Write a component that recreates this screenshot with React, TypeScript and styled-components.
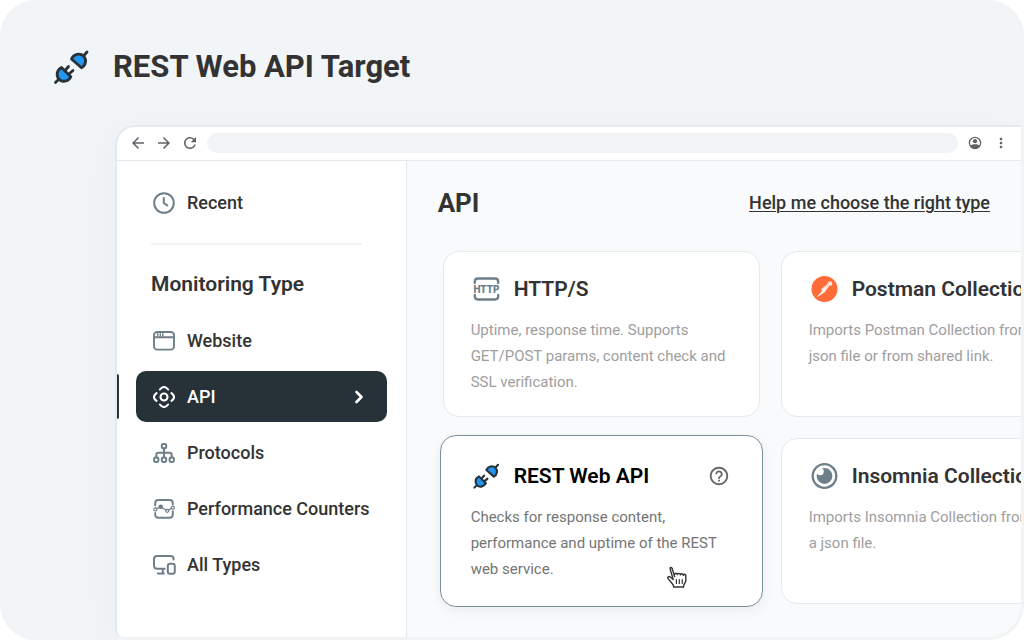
import React from "react";
import styled, { createGlobalStyle, css } from "styled-components";
import { MdArrowBack, MdArrowForward, MdRefresh, MdMoreVert, MdHelpOutline } from "react-icons/md";

const colors = {
  ink: "#333333",
  dark: "#263238",
  slate: "#6f7f8a",
  line: "#e4e9ec",
  blue: "#2196f3",
};

const GlobalStyle = createGlobalStyle`
  *, *::before, *::after { box-sizing: border-box; }
  body {
    margin: 0;
    background: #ffffff;
    color: ${colors.ink};
    font-family: Roboto, "Liberation Sans", sans-serif;
  }
  button, input { font: inherit; color: inherit; }
  h1, h2, h3, p, ul { margin: 0; padding: 0; }
`;

const Frame = styled.div`
  display: flex;
  flex-direction: column;
  height: 100vh;
  min-height: 640px;
  border: 3px solid #f1f3f4;
  border-radius: 36px;
  background: #f1f5f7;
  overflow: hidden;
`;

const PageHeader = styled.header`
  display: flex;
  align-items: center;
  gap: 24px;
  padding: 46px 50px 40px;
`;

const PageTitle = styled.h1`
  font-size: 31px;
  line-height: 36px;
  font-weight: 700;
`;

const BrowserWindow = styled.div`
  flex: 1;
  display: flex;
  flex-direction: column;
  margin-left: 112px;
  border: solid ${colors.line};
  border-width: 2px 0 0 2px;
  border-radius: 20px 0 0 8px;
  background: #ffffff;
  box-shadow: -6px 6px 40px rgba(38, 50, 56, 0.03);
  overflow: hidden;
`;

const Toolbar = styled.div`
  display: flex;
  align-items: center;
  gap: 8px;
  height: 34px;
  padding: 0 11px 1px 12px;
  border-bottom: 1px solid ${colors.line};
  color: #5f6368;
`;

const ToolButton = styled.button`
  display: flex;
  align-items: center;
  justify-content: center;
  width: 18px;
  height: 18px;
  padding: 0;
  border: 0;
  background: none;
`;

const AddressBar = styled.input`
  flex: 1;
  min-width: 0;
  height: 20px;
  padding: 0 12px;
  border: 0;
  border-radius: 10px;
  background: #f1f3f4;
  font-size: 12px;
`;

const Body = styled.div`
  flex: 1;
  display: flex;
  min-height: 0;
`;

const Sidebar = styled.nav`
  flex: 0 0 289px;
  padding: 16px 19px 0;
  border-right: 1px solid ${colors.line};
`;

const NavList = styled.ul`
  display: flex;
  flex-direction: column;
  gap: 5px;
  list-style: none;
`;

const NavItem = styled.a<{ $active?: boolean }>`
  position: relative;
  display: flex;
  align-items: center;
  gap: 12px;
  height: 51px;
  padding: 0 17px;
  border-radius: 10px;
  font-size: 18px;
  line-height: 24px;
  font-weight: 500;
  text-decoration: none;
  white-space: nowrap;
  color: ${colors.ink};

  > svg { flex: none; color: ${colors.slate}; }

  ${(p) =>
    p.$active &&
    css`
      background: ${colors.dark};
      color: #ffffff;
      > svg { color: #ffffff; }
      &::before {
        content: "";
        position: absolute;
        left: -19px;
        top: 3px;
        bottom: 3px;
        width: 2px;
        border-radius: 0 2px 2px 0;
        background: ${colors.dark};
      }
    `}
`;

const NavLabel = styled.span`
  flex: 1;
`;

const Divider = styled.hr`
  height: 2px;
  margin: 15px 25px 27px 15px;
  border: 0;
  background: #f1f3f4;
`;

const NavHeading = styled.h2`
  padding: 0 15px;
  margin-bottom: 19px;
  font-size: 21px;
  line-height: 24px;
  font-weight: 600;
`;

const Main = styled.main`
  flex: 1;
  min-width: 0;
  padding: 26px 31px 0;
  background: #f8fafc;
  overflow: hidden;
`;

const MainHeader = styled.div`
  display: flex;
  align-items: center;
  justify-content: space-between;
  height: 32px;
  margin-bottom: 32px;
`;

const MainTitle = styled.h2`
  font-size: 26px;
  line-height: 32px;
  font-weight: 700;
`;

const HelpLink = styled.a`
  font-size: 18px;
  line-height: 24px;
  font-weight: 500;
  color: ${colors.ink};
  text-decoration: underline;
  text-decoration-thickness: 1px;
  text-underline-offset: 2px;
`;

const CardGrid = styled.div`
  display: grid;
  grid-template-columns: repeat(2, minmax(317px, 1fr));
  gap: 21px;
  padding-left: 5px;
`;

const Card = styled.article<{ $selected?: boolean }>`
  position: relative;
  padding: 22px 27px 21px;
  border: 1px solid ${colors.line};
  border-radius: 16px;
  background: #ffffff;
  color: #9e9e9e;

  ${(p) =>
    p.$selected &&
    css`
      margin: -3px;
      padding: 25px 30px 24px;
      border-color: #78909c;
      box-shadow: 0 4px 12px rgba(38, 50, 56, 0.06);
      color: #757575;
    `}
`;

const CardHeader = styled.div`
  display: flex;
  align-items: center;
  gap: 13px;
  height: 30px;
  margin-bottom: 13px;

  > svg { flex: none; color: ${colors.slate}; }
`;

const CardTitle = styled.h3<{ $selected?: boolean }>`
  flex: 1;
  font-size: 21px;
  line-height: 28px;
  font-weight: 600;
  white-space: nowrap;
  color: ${(p) => (p.$selected ? "#000000" : colors.ink)};
`;

const HelpButton = styled.button`
  display: flex;
  padding: 0 2px;
  border: 0;
  background: none;
  color: #666666;
`;

const CardText = styled.p`
  min-height: 78px;
  font-size: 15px;
  line-height: 26px;
`;

const Pointer = styled.span`
  position: absolute;
  right: 74px;
  bottom: 17px;
  display: flex;
`;

const PlugIcon = ({ size, inset = 0 }: { size: number; inset?: number }) => (
  <svg width={size} height={size} viewBox={`${-inset} ${-inset} ${36 + inset * 2} ${36 + inset * 2}`} fill="none" stroke={colors.dark} strokeWidth="2.800" strokeLinecap="round" strokeLinejoin="round">
    <path d="M30 7.500 34 3" />
    <path d="M18.500 10C20.500 5 27 3.500 30.500 7S33 16.500 28.500 18.800Z" fill={colors.blue} />
    <path d="M6 30 2.500 33.500M12.500 21 15.500 17.500M16.500 24.500 20 21.500" />
    <path d="M8.500 18.500C3.500 21 3 27 6 30.200S15 33 17.800 27.800Z" fill={colors.blue} />
  </svg>
);

const ClockIcon = () => (
  <svg width="22" height="22" viewBox="0 0 22 22" fill="none" stroke="currentColor" strokeWidth="2" strokeLinecap="round" strokeLinejoin="round">
    <circle cx="11" cy="11" r="9.800" />
    <path d="M10.800 6v5l3.400 2.400" />
  </svg>
);

const WebsiteIcon = () => (
  <svg width="22" height="22" viewBox="0 0 22 22" fill="none" stroke="currentColor" strokeWidth="1.900" strokeLinecap="round">
    <rect x="1" y="2" width="20" height="17.600" rx="3.200" />
    <path d="M1 7.200h20" />
    <path d="M4.800 3.500v2.600M7.300 3.500v2.600M9.800 3.500v2.600" strokeWidth="1.300" />
  </svg>
);

const ApiIcon = () => (
  <svg width="22" height="22" viewBox="0 0 22 22" fill="none" stroke="currentColor" strokeWidth="2.100" strokeLinecap="round" strokeLinejoin="round">
    <circle cx="11" cy="11" r="3.500" />
    <path d="M6.900 3.500C8 2 9.500 1 11 1s3 1 4.100 2.500M6.900 18.500C8 20 9.500 21 11 21s3-1 4.100-2.500" />
    <path d="M3.500 7.100C2 8.200 1 9.600 1 11s1 2.800 2.500 3.900M18.500 7.100C20 8.200 21 9.600 21 11s-1 2.800-2.500 3.900" />
  </svg>
);

const ProtocolsIcon = () => (
  <svg width="22" height="22" viewBox="0 0 22 22" fill="none" stroke="currentColor" strokeWidth="2" strokeLinecap="round" strokeLinejoin="round">
    <rect x="8.800" y="2" width="4.400" height="4.200" rx="1.300" />
    <rect x="1.100" y="15.500" width="4.300" height="4.400" rx="1.300" />
    <rect x="8.800" y="15.500" width="4.400" height="4.400" rx="1.300" />
    <rect x="16.600" y="15.500" width="4.300" height="4.400" rx="1.300" />
    <path d="M11 6.200v9.200M3.300 15.400v-2.400q0-2.200 2.200-2.200h11q2.200 0 2.200 2.200v2.400" />
  </svg>
);

const CountersIcon = () => (
  <svg width="22" height="22" viewBox="0 0 22 22" fill="none" stroke="currentColor" strokeWidth="1.900" strokeLinecap="round" strokeLinejoin="round">
    <path d="M2.200 7.500V5.200q0-3.200 3.200-3.200h11.200q3.200 0 3.200 3.200v1M2.200 15v1.600q0 3.200 3.200 3.200h11.200q3.200 0 3.200-3.200v-3.400" />
    <circle cx="2.300" cy="11.400" r="1.500" strokeWidth="1.200" />
    <circle cx="7.700" cy="8.800" r="1.700" fill="currentColor" strokeWidth="1.200" />
    <circle cx="14.200" cy="12.800" r="1.500" strokeWidth="1.200" />
    <circle cx="19.900" cy="9.700" r="1.500" strokeWidth="1.200" />
    <path d="m3.800 10.700 2.400-1.200M9.300 9.800l3.500 2.200M15.500 12l3-1.600" strokeWidth="1.300" />
  </svg>
);

const DevicesIcon = () => (
  <svg width="22" height="22" viewBox="0 0 22 22" overflow="visible" fill="none" stroke="currentColor" strokeWidth="2" strokeLinecap="round" strokeLinejoin="round">
    <path d="M20.600 5.600V5q0-3-3-3H4.200Q1 2 1 5v6.600q0 3.200 3.200 3.200h7.400M9.800 15v4.400M4.800 19.600h6" />
    <rect x="14.800" y="9.800" width="7" height="10" rx="2.200" />
  </svg>
);

const ChevronIcon = () => (
  <svg width="22" height="16" viewBox="0 0 22 16" fill="none" stroke="currentColor" strokeWidth="2.600" strokeLinecap="round" strokeLinejoin="round">
    <path d="m8.500 3 5 5-5 5" />
  </svg>
);

const AccountIcon = () => (
  <svg width="14" height="14" viewBox="0 0 14 14">
    <circle cx="7" cy="7" r="5.600" fill="none" stroke="currentColor" strokeWidth="1.300" />
    <circle cx="7" cy="5.200" r="2.100" fill="currentColor" />
    <path d="M2.200 9.700C3.600 8.700 5.200 8.300 7 8.300s3.400.4 4.800 1.400C10.800 11.700 9.200 12.800 7 12.800S3.200 11.700 2.200 9.700Z" fill="currentColor" />
  </svg>
);

const HttpLabel = styled.text`
  font-family: Roboto, sans-serif;
  font-size: 10px;
  font-weight: 900;
`;

const HttpIcon = () => (
  <svg width="30" height="30" viewBox="0 0 30 30" fill="none" stroke="currentColor" strokeWidth="2.300" strokeLinecap="round">
    <path d="M3.800 9V7.700q0-3.200 3.200-3.200h17q3.200 0 3.200 3.200V9M3.800 21v1.300q0 3.200 3.200 3.200h17q3.200 0 3.200-3.200V21" />
    <HttpLabel x="15.500" y="18.600" textAnchor="middle" fill="currentColor" stroke="none">HTTP</HttpLabel>
  </svg>
);

const PostmanIcon = () => (
  <svg width="30" height="30" viewBox="0 0 30 30">
    <circle cx="15.500" cy="15" r="13" fill="#ff6c37" />
    <circle cx="21" cy="9.600" r="2.300" fill="#ffe3d8" />
    <path d="M18.800 9.800 12.200 15.300l1.200 1.300-5.200 6.100.2.300 7.200-4.700 4.500-6.300Z" fill="#ffffff" />
    <path d="m12.200 16.200 7-5.600M14 17.600l5.400-5.800" stroke="#ffb498" strokeWidth=".6" />
  </svg>
);

const InsomniaIcon = () => (
  <svg width="30" height="30" viewBox="0 0 30 30">
    <circle cx="15.500" cy="15" r="11.800" fill="none" stroke="currentColor" strokeWidth="2.300" />
    <circle cx="15.500" cy="15" r="7.900" fill="currentColor" />
    <circle cx="11.200" cy="10.600" r="3.600" fill="#ffffff" />
  </svg>
);

const HandIcon = () => (
  <svg width="22" height="24" viewBox="0 0 22 24" fill="#ffffff" stroke="#333333" strokeWidth="1.400" strokeLinejoin="round" strokeLinecap="round">
    <path d="M8.600 11.500 6.200 3.600C5.700 1.900 3.600 2.300 4.200 4.200l3 10.300-2.700-2.300c-1.700-1.400-3.600-.1-2.400 1.400l5 6.200.6 2.200h9.800l.4-2.200 1.900-3.600V10.600c0-1.700-2.300-1.700-2.500-.2-.1-2-2.600-2.100-2.900-.5-.2-1.900-2.700-2-3-.4-.3-1.600-2.500-1.600-2.800 0" />
    <path d="M10.400 14.500v4M13.300 14.500v4M16.200 14.500v4" strokeWidth="1.200" />
  </svg>
);

const types = [
  { label: "Website", Icon: WebsiteIcon },
  { label: "API", Icon: ApiIcon, active: true },
  { label: "Protocols", Icon: ProtocolsIcon },
  { label: "Performance Counters", Icon: CountersIcon },
  { label: "All Types", Icon: DevicesIcon },
];

export default function App() {
  return (
    <>
      <GlobalStyle />
      <Frame>
        <PageHeader>
          <PlugIcon size={36} />
          <PageTitle>REST Web API Target</PageTitle>
        </PageHeader>
        <BrowserWindow>
          <Toolbar>
            <ToolButton aria-label="Back"><MdArrowBack size={18} /></ToolButton>
            <ToolButton aria-label="Forward"><MdArrowForward size={18} /></ToolButton>
            <ToolButton aria-label="Reload"><MdRefresh size={18} /></ToolButton>
            <AddressBar type="text" aria-label="Address" />
            <ToolButton aria-label="Account"><AccountIcon /></ToolButton>
            <ToolButton aria-label="More"><MdMoreVert size={16} /></ToolButton>
          </Toolbar>
          <Body>
            <Sidebar>
              <NavItem href="#recent">
                <ClockIcon />
                <NavLabel>Recent</NavLabel>
              </NavItem>
              <Divider />
              <NavHeading>Monitoring Type</NavHeading>
              <NavList>
                {types.map(({ label, Icon, active }) => (
                  <li key={label}>
                    <NavItem href="#type" $active={active}>
                      <Icon />
                      <NavLabel>{label}</NavLabel>
                      {active && <ChevronIcon />}
                    </NavItem>
                  </li>
                ))}
              </NavList>
            </Sidebar>
            <Main>
              <MainHeader>
                <MainTitle>API</MainTitle>
                <HelpLink href="#help">Help me choose the right type</HelpLink>
              </MainHeader>
              <CardGrid>
                <Card>
                  <CardHeader>
                    <HttpIcon />
                    <CardTitle>HTTP/S</CardTitle>
                  </CardHeader>
                  <CardText>Uptime, response time. Supports GET/POST params, content check and SSL verification.</CardText>
                </Card>
                <Card>
                  <CardHeader>
                    <PostmanIcon />
                    <CardTitle>Postman Collection</CardTitle>
                  </CardHeader>
                  <CardText>Imports Postman Collection from<br />json file or from shared link.</CardText>
                </Card>
                <Card $selected>
                  <CardHeader>
                    <PlugIcon size={30} inset={2} />
                    <CardTitle $selected>REST Web API</CardTitle>
                    <HelpButton aria-label="About REST Web API"><MdHelpOutline size={22} /></HelpButton>
                  </CardHeader>
                  <CardText>Checks for response content, performance and uptime of the REST web service.</CardText>
                  <Pointer><HandIcon /></Pointer>
                </Card>
                <Card>
                  <CardHeader>
                    <InsomniaIcon />
                    <CardTitle>Insomnia Collection</CardTitle>
                  </CardHeader>
                  <CardText>Imports Insomnia Collection from<br />a json file.</CardText>
                </Card>
              </CardGrid>
            </Main>
          </Body>
        </BrowserWindow>
      </Frame>
    </>
  );
}
